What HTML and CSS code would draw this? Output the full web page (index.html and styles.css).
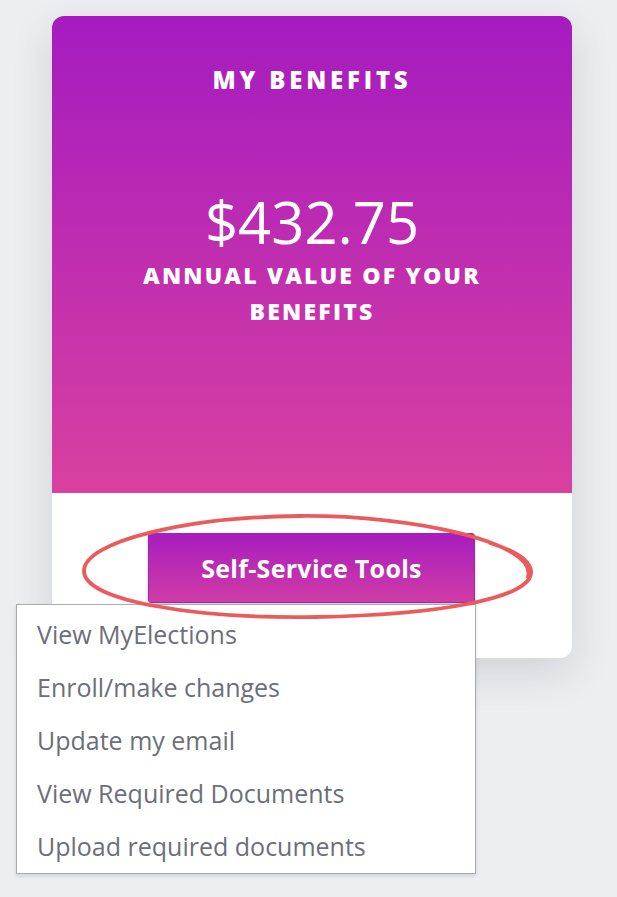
FILE: index.html
```html
<!DOCTYPE html>
<html lang="en">
  <head>
    <meta charset="UTF-8" />
    <meta name="viewport" content="width=device-width, initial-scale=1.0" />
    <title>My Benefits</title>
    <link rel="stylesheet" href="styles.css">
  </head>
  <body>
    <div class="page">
      <div class="benefits-card">
        <div class="benefits-header">
          <h2 class="benefits-title">MY BENEFITS</h2>
          <div class="benefits-amount">$432.75</div>
          <div class="benefits-caption">ANNUAL VALUE OF YOUR<br />BENEFITS</div>
        </div>

        <div class="benefits-footer">
          <div class="tools">
            <button class="tools-btn">Self-Service Tools</button>

            <ul class="tools-menu">
              <li>View MyElections</li>
              <li>Enroll/make changes</li>
              <li>Update my email</li>
              <li>View Required Documents</li>
              <li>Upload required documents</li>
            </ul>
          </div>

          <!-- red marker circle drawn over the button -->
          <svg class="marker" viewBox="0 0 460 112" width="460" height="112">
            <path d="M450 66 C460 32 336 4 222 5 C110 6 6 30 6 60 C6 90 118 108 238 106 C356 104 456 88 453 60 C452 50 438 40 412 32"
              fill="none" stroke="#ec5b5b" stroke-width="3.8" stroke-linecap="round" />
          </svg>
        </div>
      </div>
    </div>
  </body>
</html>
```

FILE: styles.css
```css
* {
  margin: 0;
  padding: 0;
  box-sizing: border-box;
}

body {
  font-family: "Open Sans", "Noto Sans", sans-serif;
  background: #eceef1;
  min-height: 100vh;
}

.page {
  padding: 16px 0 0 52px;
}

.benefits-card {
  width: 520px;
  background: #fff;
  border-radius: 12px;
  box-shadow: 0 14px 40px rgba(60, 70, 90, 0.16);
}

.benefits-header {
  height: 477px;
  padding-top: 49px;
  text-align: center;
  color: #fff;
  border-radius: 12px 12px 0 0;
  background: linear-gradient(180deg, #a51bc0 0%, #d940a0 100%);
}

.benefits-title {
  font-size: 24px;
  line-height: 30px;
  font-weight: 800;
  letter-spacing: 3.8px;
}

.benefits-amount {
  margin-top: 97px;
  font-size: 58px;
  line-height: 60px;
  font-weight: 400;
}

.benefits-caption {
  margin-top: 5px;
  font-size: 23px;
  line-height: 36px;
  font-weight: 800;
  letter-spacing: 2.2px;
}

.benefits-footer {
  position: relative;
  height: 165px;
  padding-top: 40px;
}

.tools {
  position: relative;
  width: 327px;
  margin-left: 96px;
}

.tools-btn {
  display: block;
  width: 327px;
  height: 70px;
  border: 1px solid #9a2ba8;
  border-radius: 3px;
  background: linear-gradient(180deg, #a81dbe 0%, #d03ca6 100%);
  box-shadow: 0 1px 3px rgba(0, 0, 0, 0.25);
  color: #fff;
  font-family: inherit;
  font-size: 25px;
  font-weight: 700;
  letter-spacing: 0.3px;
  cursor: pointer;
}

.tools-menu {
  position: absolute;
  top: 71px;
  left: -132px;
  width: 460px;
  padding-top: 3px;
  list-style: none;
  background: #fff;
  border: 1.5px solid #a9abb0;
  box-shadow: 0 2px 4px rgba(0, 0, 0, 0.12);
  z-index: 2;
}

.tools-menu li {
  height: 53px;
  line-height: 53px;
  padding-left: 20px;
  font-size: 25px;
  color: #6c6f77;
}

.marker {
  position: absolute;
  left: 26px;
  top: 18px;
  z-index: 3;
  pointer-events: none;
}
```
